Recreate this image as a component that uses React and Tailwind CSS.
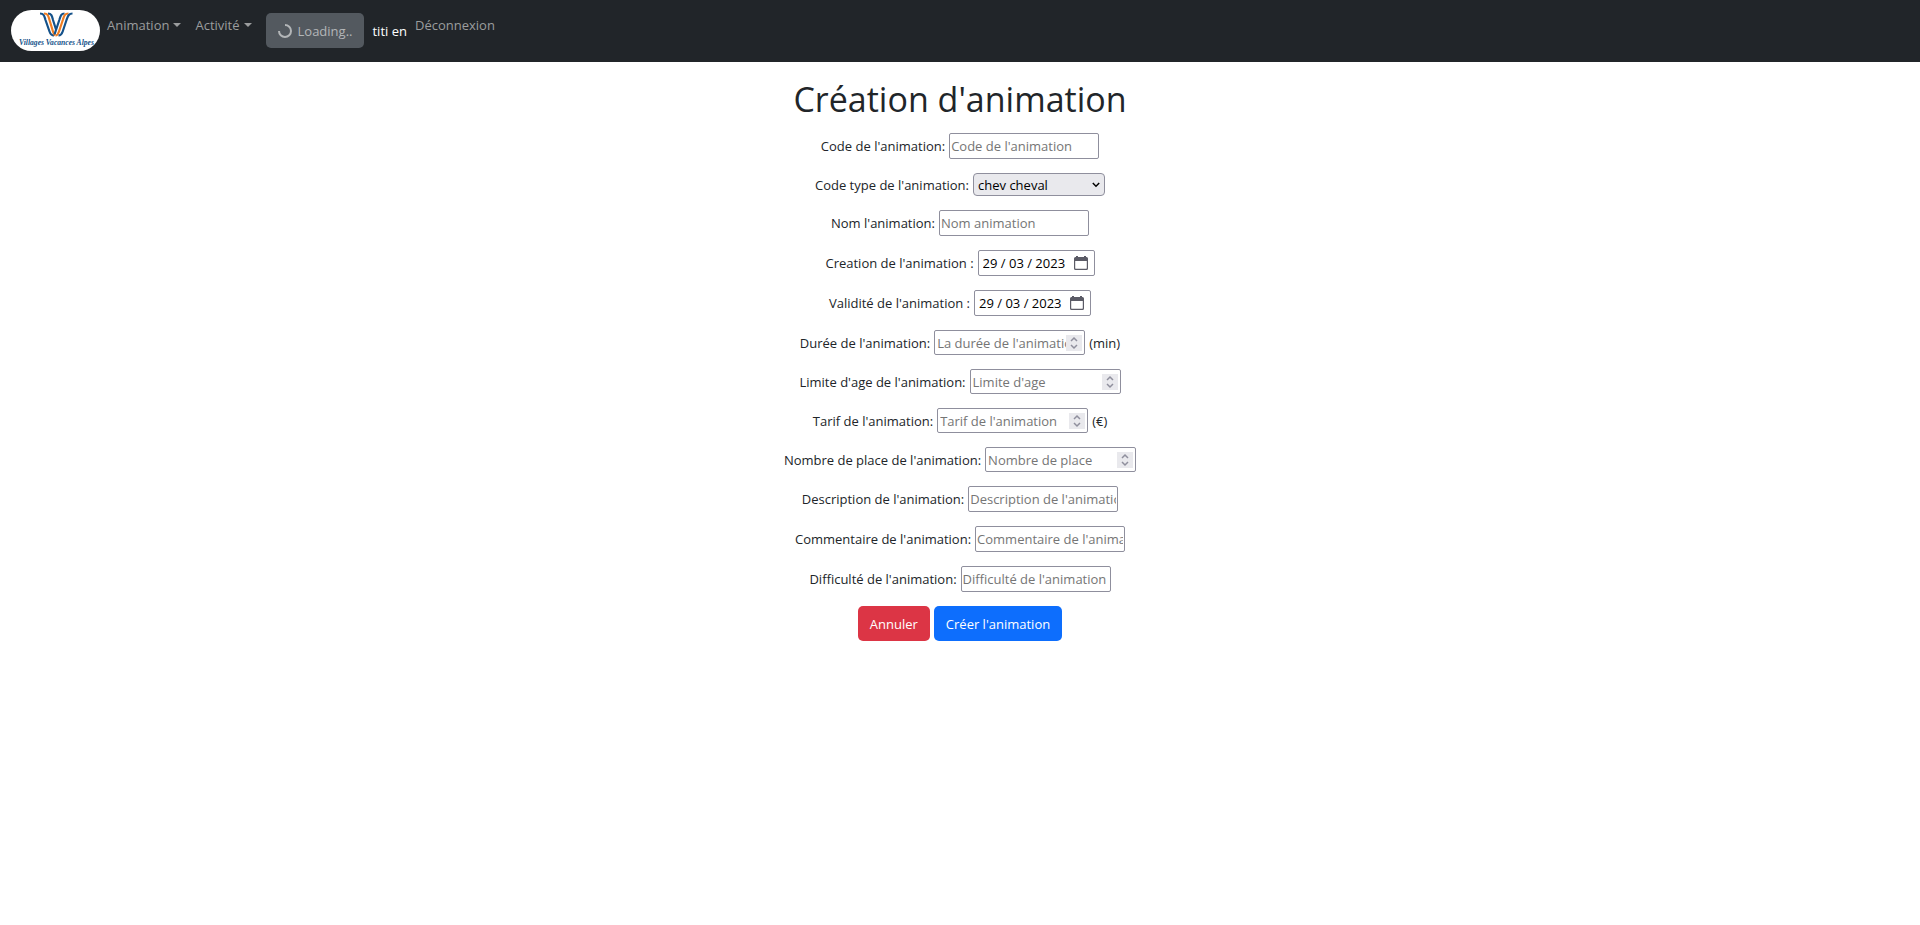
import { useState } from "react";

const control =
  "border border-[#8f8f9d] rounded-[2px] bg-white leading-5 placeholder:text-[#757575] placeholder:opacity-100";

function Logo() {
  return (
    <svg viewBox="0 0 89 41" className="h-[41px] w-[89px] shrink-0" role="img" aria-label="Villages Vacances Alpes">
      <rect width="89" height="41" rx="20.5" fill="#fff" />
      <g fill="none" strokeWidth="2.2">
        <path d="M29 3.500C33 3.500 33.300 6 34.500 10L38.500 21.500C39.500 24.500 40.500 25.500 43 25.500" stroke="#15528a" />
        <path d="M33 3.500C37 3.500 37.300 6 38.500 10L41.500 20C42.300 23 43 24.500 44 25.500" stroke="#ef7d22" />
        <path d="M37 3.500C40.500 3.500 41 6 42 10L45 19.500" stroke="#15528a" />
        <path d="M53.500 3.500C50 3.500 49.500 6 48.300 10L43.500 24.500" stroke="#15528a" />
        <path d="M57.500 3.500C53.500 3.500 53 6 51.800 10L48 21.500C47.200 24 46.500 25.500 44.500 25.500" stroke="#ef7d22" />
        <path d="M61.500 3.500C57.500 3.500 57 6 55.500 10L51.700 21.500C50.700 24.500 50 25.500 47.500 25.500" stroke="#15528a" />
      </g>
      <text x="45.500" y="35" textAnchor="middle" fontFamily="'Liberation Serif', serif" fontSize="7.600" fontWeight="700" fontStyle="italic" fill="#15528a">
        Villages Vacances Alpes
      </text>
    </svg>
  );
}

function NavMenu({ children }) {
  return (
    <button type="button" className="flex items-center gap-1 text-[#9b9d9e]">
      {children}
      <svg viewBox="0 0 8 4" className="h-1 w-2" fill="currentColor" aria-hidden="true">
        <path d="M0 0h8L4 4z" />
      </svg>
    </button>
  );
}

function Row({ id, label, suffix, children }) {
  return (
    <div className="flex items-center justify-center gap-1">
      <label htmlFor={id}>{label}</label>
      {children}
      {suffix && <span>{suffix}</span>}
    </div>
  );
}

function TextRow({ id, label, placeholder }) {
  return (
    <Row id={id} label={label}>
      <input id={id} type="text" placeholder={placeholder} className={`${control} h-[26px] w-[150px] px-px`} />
    </Row>
  );
}

function DateRow({ id, label }) {
  return (
    <Row id={id} label={label}>
      <div className={`${control} flex h-[26px] w-[117px] items-center pl-1 pr-1.5`}>
        <input id={id} type="text" defaultValue="29 / 03 / 2023" className="min-w-0 flex-1 text-black outline-none" />
        <button type="button" aria-label="Ouvrir le calendrier" className="text-[#5b5b66]">
          <svg viewBox="0 0 14 14" className="size-3.5" fill="currentColor" aria-hidden="true">
            <path fillRule="evenodd" d="M2 0h2v1h6V0h2v1h.5A1.500 1.500 0 0 1 14 2.500v10a1.500 1.500 0 0 1-1.500 1.500h-11A1.500 1.500 0 0 1 0 12.500v-10A1.500 1.500 0 0 1 1.500 1H2zM1.200 5v7.300c0 .3.200.5.500.5h10.600c.3 0 .5-.2.500-.5V5z" />
          </svg>
        </button>
      </div>
    </Row>
  );
}

function NumberRow({ id, label, placeholder, suffix }) {
  const [value, setValue] = useState("");
  const step = () => setValue((v) => String(Number(v) + 1));
  return (
    <Row id={id} label={label} suffix={suffix}>
      <div className={`${control} flex h-[25px] w-[151px] items-center px-0.5`}>
        <input
          id={id}
          type="number"
          value={value}
          onChange={(e) => setValue(e.target.value)}
          placeholder={placeholder}
          className="min-w-0 flex-1 outline-none [appearance:textfield] placeholder:text-[#757575] [&::-webkit-inner-spin-button]:appearance-none"
        />
        <button type="button" aria-label="Augmenter" onClick={step} className="bg-[#e9e9ed] text-[#8f8f9d]">
          <svg viewBox="0 0 16 16" className="size-4" fill="none" stroke="currentColor" strokeWidth="1.500" aria-hidden="true">
            <path d="M5 6l3-3 3 3M5 10l3 3 3-3" />
          </svg>
        </button>
      </div>
    </Row>
  );
}

export default function App() {
  return (
    <div className="font-['Open_Sans','Noto_Sans',sans-serif] text-[13px] leading-5 text-[#212529]">
      <nav className="flex min-h-[62px] items-start bg-[#212529] px-[11px] pt-2.5">
        <a href="#accueil">
          <Logo />
        </a>
        <div className="ml-[7px] mt-[5px] flex gap-3.5">
          <NavMenu>Animation</NavMenu>
          <NavMenu>Activité</NavMenu>
        </div>
        <button type="button" disabled className="ml-3.5 mt-[3px] flex h-[35px] items-center gap-1.5 rounded-[5px] bg-[#53595f] px-3 text-[#b3b6b8]">
          <svg viewBox="0 0 14 14" className="size-3.5" fill="none" stroke="currentColor" strokeWidth="2" aria-hidden="true">
            <path d="M7 1a6 6 0 1 1-6 6" />
          </svg>
          Loading..
        </button>
        <span className="ml-2 mt-[11px] text-white">titi en</span>
        <a href="#deconnexion" className="ml-2 mt-[5px] text-[#9b9d9e]">
          Déconnexion
        </a>
      </nav>

      <main>
        <h1 className="pt-4 text-center text-[34px] leading-[42px]">Création d'animation</h1>
        <form className="mt-[13px] flex flex-col gap-3.5" onSubmit={(e) => e.preventDefault()}>
          <TextRow id="code" label="Code de l'animation:" placeholder="Code de l'animation" />
          <Row id="type" label="Code type de l'animation:">
            <div className="grid items-center">
              <select
                id="type"
                className="col-start-1 row-start-1 h-[23px] w-[132px] appearance-none rounded-[4px] border border-[#8f8f9d] bg-[#e9e9ed] pl-1 leading-5 text-black"
              >
                <option>chev cheval</option>
              </select>
              <svg viewBox="0 0 8 6" className="pointer-events-none col-start-1 row-start-1 mr-[5px] h-1.5 w-2 justify-self-end" fill="none" stroke="#000" strokeWidth="1.500" aria-hidden="true">
                <path d="M.8 1l3.200 3.200L7.200 1" />
              </svg>
            </div>
          </Row>
          <TextRow id="nom" label="Nom l'animation:" placeholder="Nom animation" />
          <DateRow id="creation" label="Creation de l'animation :" />
          <DateRow id="validite" label="Validité de l'animation :" />
          <NumberRow id="duree" label="Durée de l'animation:" placeholder="La durée de l'animation" suffix="(min)" />
          <NumberRow id="age" label="Limite d'age de l'animation:" placeholder="Limite d'age" />
          <NumberRow id="tarif" label="Tarif de l'animation:" placeholder="Tarif de l'animation" suffix="(€)" />
          <NumberRow id="places" label="Nombre de place de l'animation:" placeholder="Nombre de place" />
          <TextRow id="description" label="Description de l'animation:" placeholder="Description de l'animation" />
          <TextRow id="commentaire" label="Commentaire de l'animation:" placeholder="Commentaire de l'animation" />
          <TextRow id="difficulte" label="Difficulté de l'animation:" placeholder="Difficulté de l'animation" />
          <div className="flex justify-center gap-1 text-white">
            <button type="button" className="h-[35px] rounded-[5px] bg-[#dc3545] px-3">
              Annuler
            </button>
            <button type="submit" className="h-[35px] rounded-[5px] bg-[#0d6efd] px-3">
              Créer l'animation
            </button>
          </div>
        </form>
      </main>
    </div>
  );
}
